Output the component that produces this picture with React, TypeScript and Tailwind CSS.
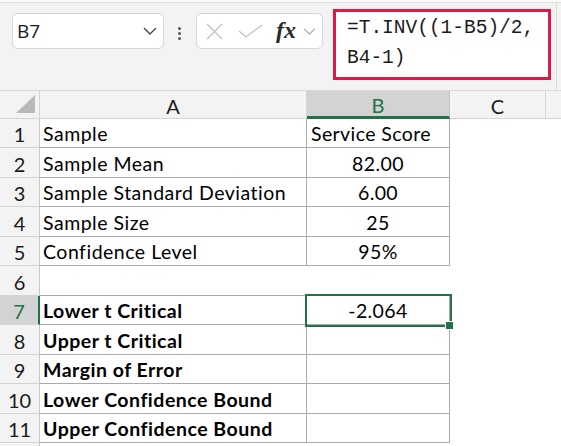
import React from 'react';

const rows = [
  { n: 1, a: 'Sample', b: 'Service Score', left: true, box: true },
  { n: 2, a: 'Sample Mean', b: '82.00', box: true },
  { n: 3, a: 'Sample Standard Deviation', b: '6.00', box: true },
  { n: 4, a: 'Sample Size', b: '25', box: true },
  { n: 5, a: 'Confidence Level', b: '95%', box: true },
  { n: 6, a: '', b: '', box: false },
  { n: 7, a: 'Lower t Critical', b: '-2.064', bold: true, box: true },
  { n: 8, a: 'Upper t Critical', b: '', bold: true, box: true },
  { n: 9, a: 'Margin of Error', b: '', bold: true, box: true },
  { n: 10, a: 'Lower Confidence Bound', b: '', bold: true, box: true },
  { n: 11, a: 'Upper Confidence Bound', b: '', bold: true, box: true },
  { n: 12, a: '', b: '', box: false, open: true },
];

const cellFont = { fontFamily: 'Lato, "Liberation Sans", sans-serif' };

function Chevron({ className }: { className?: string }) {
  return (
    <svg viewBox="0 0 14 8" className={className} fill="none" stroke="currentColor" strokeWidth="1.4">
      <polyline points="1,1 7,7 13,1" />
    </svg>
  );
}

function FormulaBar() {
  return (
    <div className="h-[91px] bg-[#f3f3f3] border-b border-[#d9d9d9] flex flex-col">
      <div className="h-[3px] bg-[#fafafa] border-b border-[#e2e2e2]" />
      <div className="flex items-start pl-3">
        {/* Name box */}
        <div className="mt-[10px] w-[152px] h-9 bg-white rounded-md border border-[#d6d6d6] flex items-center justify-between pl-[4px] pr-[6px]">
          <span className="text-[19px] text-[#1a1a1a]" style={{ fontFamily: '"Open Sans", sans-serif' }}>
            B7
          </span>
          <Chevron className="w-[14px] h-[8px] text-[#444]" />
        </div>

        {/* Drag dots */}
        <div className="mt-[24px] ml-[14px] flex flex-col gap-[2px]">
          <div className="w-[3px] h-[3px] rounded-full bg-[#555]" />
          <div className="w-[3px] h-[3px] rounded-full bg-[#555]" />
          <div className="w-[3px] h-[3px] rounded-full bg-[#555]" />
        </div>

        {/* Cancel / enter / fx */}
        <div className="mt-[10px] ml-[15px] w-[127px] h-9 bg-white rounded-md border border-[#d6d6d6] flex items-center pl-[9px]">
          <svg viewBox="0 0 17 17" className="w-[17px] h-[17px] text-[#c2c2c2]" fill="none" stroke="currentColor" strokeWidth="1.3">
            <line x1="1" y1="1" x2="16" y2="16" />
            <line x1="16" y1="1" x2="1" y2="16" />
          </svg>
          <svg viewBox="0 0 25 14" className="ml-[15px] w-[25px] h-[14px] text-[#c2c2c2]" fill="none" stroke="currentColor" strokeWidth="1.3">
            <polyline points="1,7 8,13 24,1" />
          </svg>
          <span
            className="ml-[13px] text-[24px] italic font-bold leading-none text-[#2b2b2b] -mt-[2px]"
            style={{ fontFamily: '"Liberation Serif", serif' }}
          >
            fx
          </span>
          <Chevron className="ml-[7px] w-[13px] h-[7px] text-[#a8a8a8]" />
        </div>

        {/* Formula input, highlighted */}
        <div className="mt-[6px] ml-[10px] w-[218px] h-[71px] bg-white border-[3px] border-[#dc1a4a] pl-[11px] pt-[1px]">
          <div
            className="text-[19.5px] leading-[30px] text-[#1a1a1a] whitespace-pre"
            style={{ fontFamily: '"Liberation Mono", monospace' }}
          >
            {'=T.INV((1-B5)/2,\nB4-1)'}
          </div>
        </div>

        <div className="ml-[5px] w-px h-[87px] bg-[#dcdcdc]" />
      </div>
    </div>
  );
}

function Sheet() {
  return (
    <div className="relative" style={cellFont}>
      <div className="grid grid-cols-[40px_267px_143px_96px_1fr] grid-rows-[28px_29px_30px_29px_30px_29px_30px_29px_30px_29px_30px_29px_30px]">
        {/* Column headers */}
        <div className="bg-[#f3f3f3] border-r border-b border-[#d4d4d4] relative">
          <svg viewBox="0 0 19 18" className="absolute left-[16px] top-[4px] w-[19px] h-[18px]">
            <polygon points="19,0 19,18 0,18" fill="#b9b9b9" />
          </svg>
        </div>
        <div className="bg-[#f3f3f3] border-r border-b border-[#d4d4d4] flex items-center justify-center pt-[2px] text-[20px] text-[#1a1a1a]">
          A
        </div>
        <div className="bg-[#d3d3d3] border-r border-[#c4c4c4] border-b-[3px] border-b-[#217346] flex items-center justify-center pt-[3px] text-[20px] text-[#217346]">
          B
        </div>
        <div className="bg-[#f3f3f3] border-r border-b border-[#d4d4d4] flex items-center justify-center pt-[2px] text-[20px] text-[#1a1a1a]">
          C
        </div>
        <div className="bg-[#f3f3f3] border-b border-[#d4d4d4]" />

        {rows.map((r) => {
          const sel = r.n === 7;
          return (
            <React.Fragment key={r.n}>
              <div
                className={`flex items-center justify-center pt-[2px] text-[20px] border-b border-[#d4d4d4] ${
                  sel
                    ? 'bg-[#d3d3d3] border-r-2 border-r-[#217346] text-[#217346]'
                    : 'bg-[#f3f3f3] border-r border-r-[#c9c9c9] text-[#1a1a1a]'
                }`}
              >
                {r.open ? '' : r.n}
              </div>
              <div
                className={`flex items-center pl-[3px] pt-[2px] text-[19.5px] tracking-[0.5px] text-black whitespace-nowrap overflow-hidden ${
                  r.bold ? 'font-bold' : ''
                } ${r.box ? 'border-r border-b border-[#ababab]' : r.open ? '' : 'border-b border-[#ababab]'}`}
              >
                {r.a}
              </div>
              <div
                className={`flex items-center pt-[2px] text-[19.5px] tracking-[0.4px] text-black whitespace-nowrap ${
                  r.left ? 'pl-[4px]' : 'justify-center'
                } ${r.box ? 'border-r border-b border-[#ababab]' : r.open ? '' : 'border-b border-[#ababab]'}`}
              >
                {r.b}
              </div>
              <div />
              <div />
            </React.Fragment>
          );
        })}
      </div>

      {/* Active cell selection */}
      <div className="absolute left-[305px] top-[203px] w-[147px] h-[33px] border-2 border-[#217346]" />
      <div className="absolute left-[446px] top-[231px] w-[7px] h-[7px] bg-[#217346] outline outline-1 outline-white" />
    </div>
  );
}

export default function App() {
  return (
    <div className="w-[561px] h-[446px] overflow-hidden bg-white">
      <FormulaBar />
      <Sheet />
    </div>
  );
}
